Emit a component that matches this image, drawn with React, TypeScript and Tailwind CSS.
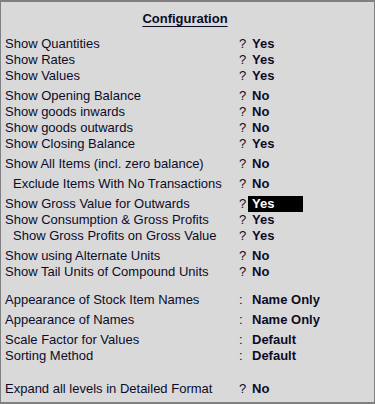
import React from 'react'

type Row = {
  label: string
  sep: '?' | ':'
  value: string
  indent?: boolean
  gap?: string
  active?: boolean
}

const rows: Row[] = [
  { label: 'Show Quantities', sep: '?', value: 'Yes' },
  { label: 'Show Rates', sep: '?', value: 'Yes' },
  { label: 'Show Values', sep: '?', value: 'Yes' },
  { label: 'Show Opening Balance', sep: '?', value: 'No', gap: 'mt-[4px]' },
  { label: 'Show goods inwards', sep: '?', value: 'No' },
  { label: 'Show goods outwards', sep: '?', value: 'No' },
  { label: 'Show Closing Balance', sep: '?', value: 'Yes' },
  { label: 'Show All Items (incl. zero balance)', sep: '?', value: 'No', gap: 'mt-[4px]' },
  { label: 'Exclude Items With No Transactions', sep: '?', value: 'No', indent: true, gap: 'mt-[4px]' },
  { label: 'Show Gross Value for Outwards', sep: '?', value: 'Yes', gap: 'mt-[4px]', active: true },
  { label: 'Show Consumption & Gross Profits', sep: '?', value: 'Yes' },
  { label: 'Show Gross Profits on Gross Value', sep: '?', value: 'Yes', indent: true },
  { label: 'Show using Alternate Units', sep: '?', value: 'No', gap: 'mt-[4px]' },
  { label: 'Show Tail Units of Compound Units', sep: '?', value: 'No' },
  { label: 'Appearance of Stock Item Names', sep: ':', value: 'Name Only', gap: 'mt-[12px]' },
  { label: 'Appearance of Names', sep: ':', value: 'Name Only', gap: 'mt-[4px]' },
  { label: 'Scale Factor for Values', sep: ':', value: 'Default', gap: 'mt-[4px]' },
  { label: 'Sorting Method', sep: ':', value: 'Default' },
  { label: 'Expand all levels in Detailed Format', sep: '?', value: 'No', gap: 'mt-[17px]' },
]

export default function App() {
  return (
    <div className="w-[375px] h-[404px] box-border bg-[#d9d9d9] border-t-2 border-b-2 border-x border-[#808080] text-[#0c0c2a] text-[13px] leading-[16px] font-['Liberation_Sans',Arial,sans-serif] overflow-hidden">
      <div className="flex justify-center pt-[9px] pr-[5px]">
        <h1 className="font-bold underline decoration-1 underline-offset-[3px]">
          Configuration
        </h1>
      </div>

      <div className="mt-[9px]">
        {rows.map((row) => (
          <div key={row.label} className={`flex h-[16px] ${row.gap ?? ''}`}>
            <span className={`w-[238px] whitespace-nowrap ${row.indent ? 'pl-[12px]' : 'pl-[4px]'}`}>
              {row.label}
            </span>
            <span className="w-[9px]">{row.sep}</span>
            <span
              className={`w-[55px] h-[16px] pl-[4px] font-bold whitespace-nowrap ${
                row.active ? 'bg-black text-white' : ''
              }`}
            >
              {row.value}
            </span>
          </div>
        ))}
      </div>
    </div>
  )
}
